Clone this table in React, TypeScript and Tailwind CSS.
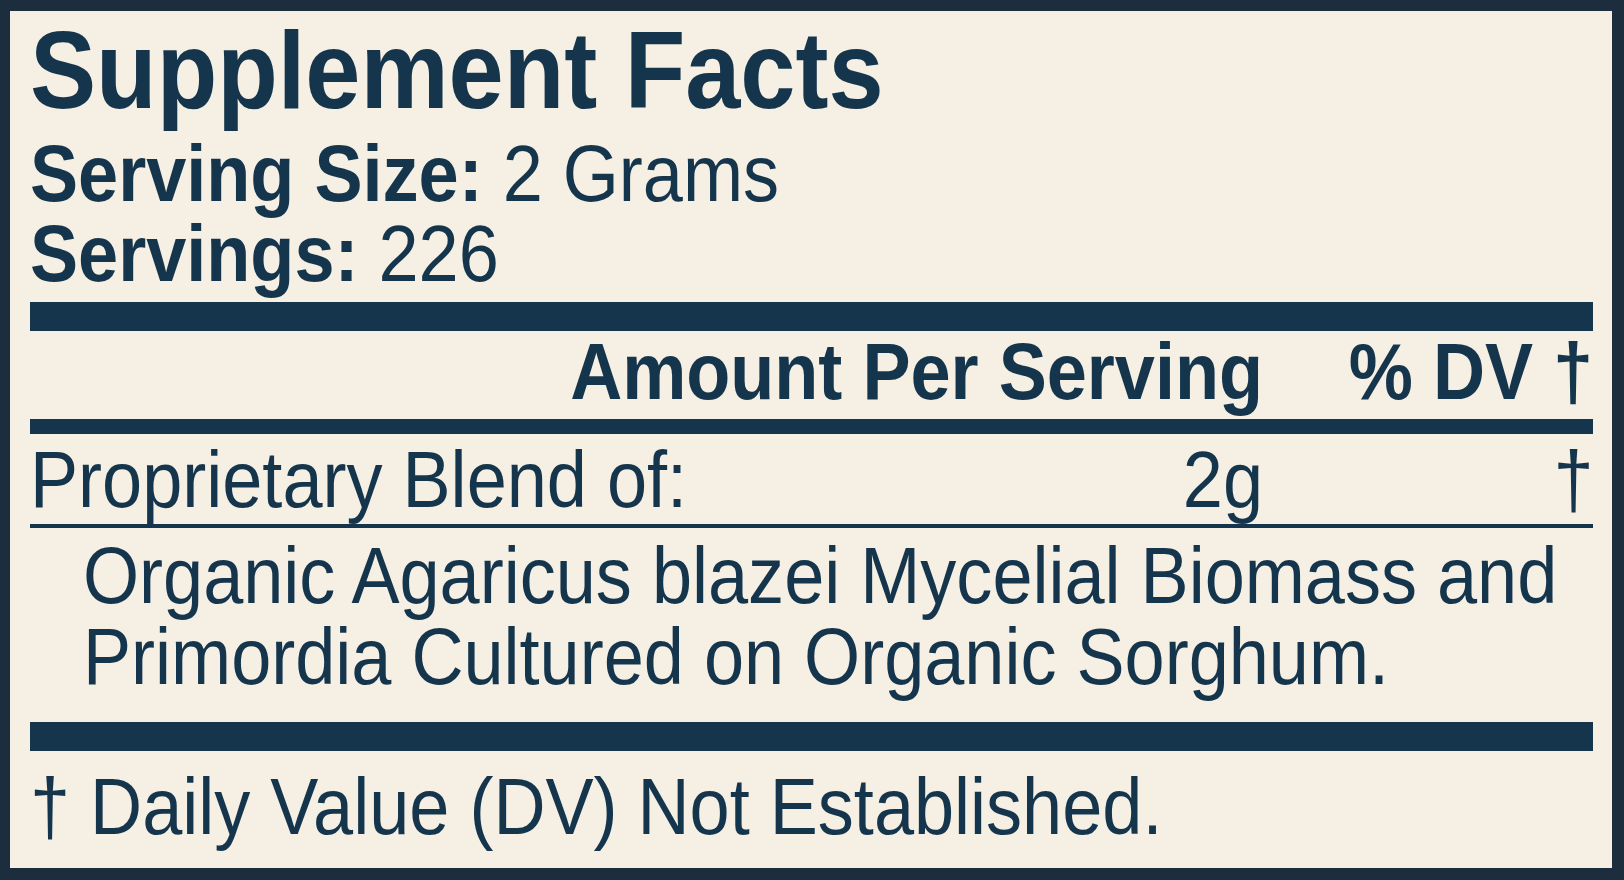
import React from 'react';

// Label text is a slightly condensed Helvetica; Liberation Sans squeezed horizontally matches it.
const squeeze = 'inline-block whitespace-nowrap scale-x-[0.901]';

const Rule: React.FC<{ className: string }> = ({ className }) => (
  <div className={`w-full bg-[#15354c] ${className}`} />
);

const App: React.FC = () => {
  return (
    <div className="w-[1624px] h-[880px] bg-[#f5efe4] border-[#1c2e3e] border-t-[11px] border-l-[10px] border-r-[12px] border-b-[12px] text-[#15354c] font-['Liberation_Sans',Arial,sans-serif] overflow-hidden">
      <div className="flex flex-col pl-[20px] pr-[19px] pt-[4px]">
        {/* Header */}
        <h1 className="text-[110px] leading-[110px] font-bold">
          <span className={`${squeeze} origin-left`}>Supplement Facts</span>
        </h1>
        <p className="mt-[9px] text-[80px] leading-[80px]">
          <span className={`${squeeze} origin-left`}>
            <b>Serving Size:</b> 2 Grams
          </span>
        </p>
        <p className="text-[80px] leading-[80px]">
          <span className={`${squeeze} origin-left`}>
            <b>Servings:</b> 226
          </span>
        </p>

        <Rule className="mt-[8px] h-[29px]" />

        {/* Column headings */}
        <div className="mt-[1px] grid grid-cols-[1fr_auto_330px] text-[80px] leading-[80px] font-bold">
          <div />
          <div className="justify-self-end">
            <span className={`${squeeze} origin-right`}>Amount Per Serving</span>
          </div>
          <div className="justify-self-end">
            <span className={`${squeeze} origin-right`}>% DV †</span>
          </div>
        </div>

        <Rule className="mt-[7px] h-[15px]" />

        {/* Blend row */}
        <div className="mt-[6px] grid grid-cols-[1fr_auto_330px] text-[80px] leading-[80px]">
          <div>
            <span className={`${squeeze} origin-left`}>Proprietary Blend of:</span>
          </div>
          <div className="justify-self-end">
            <span className={`${squeeze} origin-right`}>2g</span>
          </div>
          <div className="justify-self-end">
            <span className={`${squeeze} origin-right`}>†</span>
          </div>
        </div>

        <Rule className="mt-[4px] h-[4px]" />

        <div className="mt-[7px] pl-[53px] text-[80px] leading-[81px]">
          <span className={`${squeeze} origin-left block`}>Organic Agaricus blazei Mycelial Biomass and</span>
          <span className={`${squeeze} origin-left block`}>Primordia Cultured on Organic Sorghum.</span>
        </div>

        <Rule className="mt-[25px] h-[29px]" />

        {/* Footnote */}
        <p className="mt-[16px] text-[80px] leading-[80px]">
          <span className={`${squeeze} origin-left`}>† Daily Value (DV) Not Established.</span>
        </p>
      </div>
    </div>
  );
};

export default App;
